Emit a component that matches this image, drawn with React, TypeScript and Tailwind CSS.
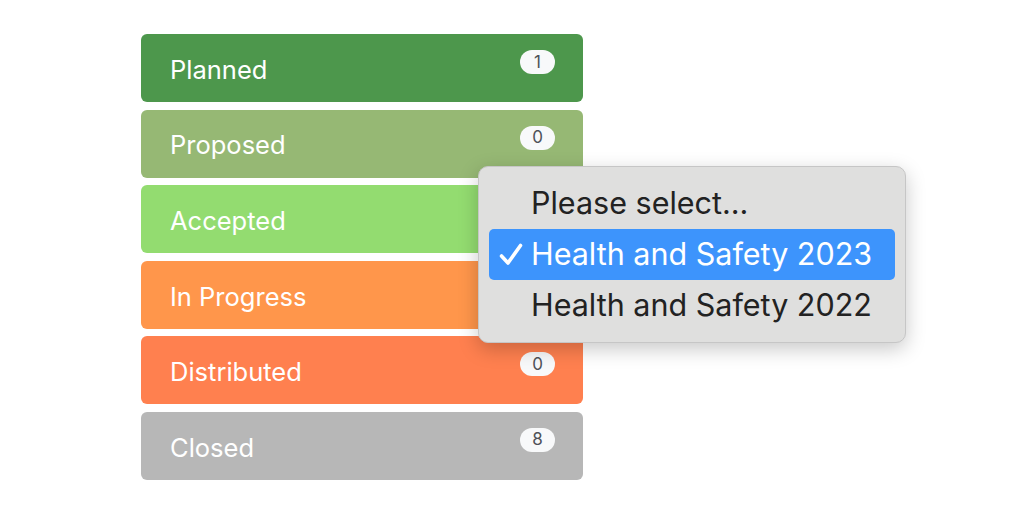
const rows = [
  { label: "Planned", count: 1, color: "bg-[#4d974c]" },
  { label: "Proposed", count: 0, color: "bg-[#96b874]" },
  { label: "Accepted", count: null, color: "bg-[#93dc70]" },
  { label: "In Progress", count: null, color: "bg-[#ff964b]" },
  { label: "Distributed", count: 0, color: "bg-[#ff804f]" },
  { label: "Closed", count: 8, color: "bg-[#b7b7b7]" },
];

const options = ["Please select...", "Health and Safety 2023", "Health and Safety 2022"];

export default function App() {
  return (
    <div className="relative w-[1024px] h-[512px] bg-white font-['Inter','Liberation_Sans',sans-serif] overflow-hidden">
      <div className="ml-[141px] pt-[34px] w-[442px] flex flex-col gap-[7.6px]">
        {rows.map((r) => (
          <div
            key={r.label}
            className={`${r.color} h-[68px] rounded-[6px] pl-[29px] pr-[28px] flex items-center justify-between`}
          >
            <span className="text-white text-[25.5px] leading-none pt-[3px]">{r.label}</span>
            {r.count !== null && (
              <span className="self-start mt-[16px] w-[35px] h-[24px] rounded-full bg-[#f8f9fa] text-[#4f5258] text-[17px] leading-none flex items-center justify-center">
                {r.count}
              </span>
            )}
          </div>
        ))}
      </div>

      <div className="absolute left-[478px] top-[166px] w-[428px] rounded-[10px] border border-[#c6c6c6] bg-[#dfdfde] px-[10px] py-[11px] shadow-[0_6px_20px_rgba(0,0,0,0.22)]">
        {options.map((o, i) => {
          const selected = i === 1;
          return (
            <div
              key={o}
              className={`relative h-[51px] rounded-[5px] pl-[42px] flex items-center text-[30.5px] leading-none ${
                selected ? "bg-[#3d94fc] text-white" : "text-[#222222]"
              }`}
            >
              {selected && (
                <svg className="absolute left-[10px] top-[14px]" width="24" height="23" viewBox="0 0 24 23" fill="none">
                  <path d="M2.5 13 L9 20 L21.5 2.5" stroke="white" strokeWidth="3.6" strokeLinecap="round" strokeLinejoin="round" />
                </svg>
              )}
              {o}
            </div>
          );
        })}
      </div>
    </div>
  );
}
